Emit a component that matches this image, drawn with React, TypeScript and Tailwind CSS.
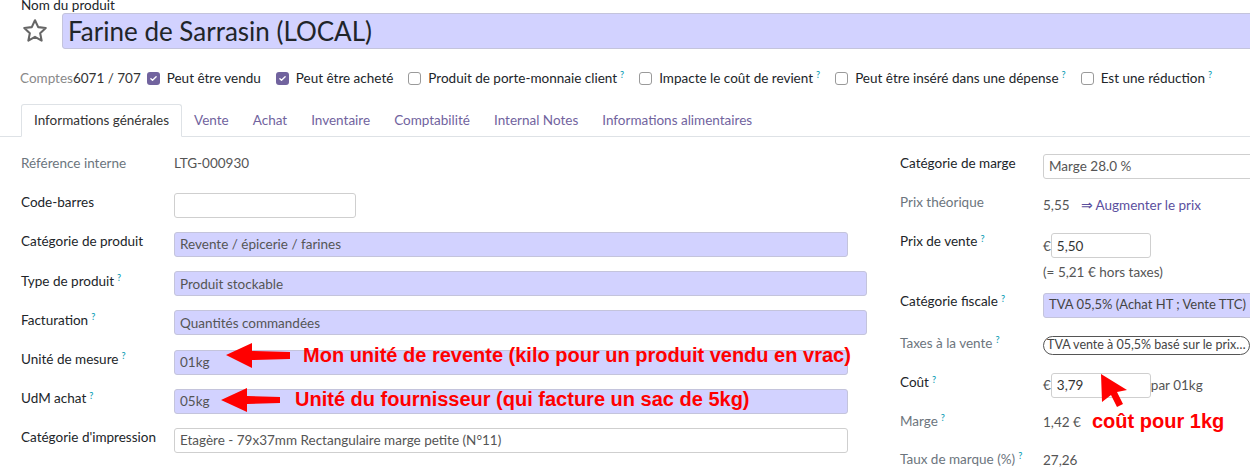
import type { ReactNode } from "react";

const font = { fontFamily: "Lato, 'Noto Sans', sans-serif" };
const noteFont = { fontFamily: "'Liberation Sans', Arial, sans-serif" };

function Help() {
  return <sup className="ml-[3px] text-[9px] font-semibold text-[#17a2b8]">?</sup>;
}

function Check({ on, label, help }: { on?: boolean; label: string; help?: boolean }) {
  return (
    <label className="flex items-center gap-[7px] whitespace-nowrap">
      {on ? (
        <span className="flex h-[13px] w-[13px] items-center justify-center rounded-[3px] bg-[#71639e]">
          <svg viewBox="0 0 12 12" className="h-[9px] w-[9px]">
            <path d="M2.5 6.2l2.2 2.2 4.8-4.8" fill="none" stroke="white" strokeWidth="1.8" strokeLinecap="round" strokeLinejoin="round" />
          </svg>
        </span>
      ) : (
        <span className="h-[13px] w-[13px] rounded-[3px] border border-[#9a9a9a] bg-white" />
      )}
      <span className="text-[#212529]">
        {label}
        {help ? <Help /> : null}
      </span>
    </label>
  );
}

function Field({ children, w, tone = "lav", className = "" }: { children?: ReactNode; w: string; tone?: "lav" | "white"; className?: string }) {
  const bg = tone === "lav" ? "bg-[#d2d2ff] border-[#c4c4dc]" : "bg-white border-[#cfcfcf]";
  return (
    <div className={`flex h-[25px] items-center overflow-hidden whitespace-nowrap rounded-[3px] border px-[5px] text-[13.5px] text-[#555] ${bg} ${w} ${className}`}>
      {children}
    </div>
  );
}

function Row({ label, muted, help, h = "h-[39.2px]", lw, children }: { label: string; muted?: boolean; help?: boolean; h?: string; lw: string; children?: ReactNode }) {
  return (
    <div className={`flex items-center ${h}`}>
      <div className={`${lw} shrink-0 -mt-[3px] text-[13.5px] ${muted ? "text-[#6c757d]" : "text-[#212529]"}`}>
        {label}
        {help ? <Help /> : null}
      </div>
      <div className="flex items-center">{children}</div>
    </div>
  );
}

const tabs = ["Vente", "Achat", "Inventaire", "Comptabilité", "Internal Notes", "Informations alimentaires"];

export default function App() {
  return (
    <div className="relative h-[469px] w-[1250px] overflow-hidden bg-white" style={font}>
      {/* header: product name */}
      <div className="absolute -top-[5px] left-[21px] text-[13.5px] text-[#212529]">Nom du produit</div>
      <div className="flex items-center pl-[21px] pt-[13px]">
        <svg viewBox="0 0 24 24" className="h-[28px] w-[28px] shrink-0">
          <path d="M12 2.8l2.75 5.9 6.45.75-4.78 4.4 1.28 6.37L12 17.03l-5.7 3.19 1.28-6.37L2.8 9.45l6.45-.75z" fill="none" stroke="#666" strokeWidth="1.8" strokeLinejoin="round" />
        </svg>
        <div className="ml-[13px] flex h-[36px] w-[1200px] shrink-0 items-center rounded-[3px] border border-[#c4c4dc] bg-[#d2d2ff] pl-[5px] text-[26px] text-[#212529]">
          Farine de Sarrasin (LOCAL)
        </div>
      </div>

      {/* flags */}
      <div className="mt-[20px] flex h-[18px] items-center pl-[20px] text-[13.5px]">
        <span className="text-[#8a8a8a]">Comptes</span>
        <span className="mr-[6px] text-[#333]">6071 / 707</span>
        <div className="flex items-center gap-[15px]">
          <Check on label="Peut être vendu" />
          <Check on label="Peut être acheté" />
          <Check label="Produit de porte-monnaie client" help />
          <Check label="Impacte le coût de revient" help />
          <Check label="Peut être inséré dans une dépense" help />
          <Check label="Est une réduction" help />
        </div>
      </div>

      {/* tabs */}
      <div className="mt-[17px] flex h-[33px] items-end border-b border-[#dee2e6] pl-[21px] text-[13.5px]">
        <div className="-mb-px flex h-[33px] items-center rounded-t-[3px] border border-b-white border-[#dee2e6] bg-white px-[12px] text-[#333]">
          Informations générales
        </div>
        {tabs.map((t) => (
          <div key={t} className="flex h-[32px] items-center px-[12px] text-[#71639e]">
            {t}
          </div>
        ))}
      </div>

      {/* form body */}
      <div className="flex pt-[8px]">
        <div className="w-[879px] shrink-0 pl-[21px]">
          <Row label="Référence interne" muted lw="w-[153px]">
            <span className="-mt-[3px] text-[13.5px] text-[#555]">LTG-000930</span>
          </Row>
          <Row label="Code-barres" lw="w-[153px]">
            <Field w="w-[182px]" tone="white" className="mt-[3px]" />
          </Row>
          <Row label="Catégorie de produit" lw="w-[153px]">
            <Field w="w-[674px]" className="mt-[3px]">Revente / épicerie / farines</Field>
          </Row>
          <Row label="Type de produit" help lw="w-[153px]">
            <Field w="w-[693px]" className="mt-[3px]">Produit stockable</Field>
          </Row>
          <Row label="Facturation" help lw="w-[153px]">
            <Field w="w-[693px]" className="mt-[3px]">Quantités commandées</Field>
          </Row>
          <Row label="Unité de mesure" help lw="w-[153px]">
            <Field w="w-[674px]" className="mt-[3px]">01kg</Field>
          </Row>
          <Row label="UdM achat" help lw="w-[153px]">
            <Field w="w-[674px]" className="mt-[3px]">05kg</Field>
          </Row>
          <Row label="Catégorie d'impression" lw="w-[153px]">
            <Field w="w-[674px]" tone="white" className="mt-[3px]">Etagère - 79x37mm Rectangulaire marge petite (N°11)</Field>
          </Row>
        </div>

        <div className="shrink-0 pl-[21px]">
          <Row label="Catégorie de marge" lw="w-[143px]">
            <Field w="w-[230px]" tone="white" className="mt-[3px]">Marge 28.0 %</Field>
          </Row>
          <Row label="Prix théorique" muted lw="w-[143px]">
            <span className="mt-[3px] text-[13.5px] text-[#555]">5,55</span>
            <span className="ml-[11px] mt-[3px] text-[13.5px] text-[#5b4f9e]">⇒ Augmenter le prix</span>
          </Row>
          <Row label="Prix de vente" help lw="w-[143px]">
            <span className="mt-[6px] text-[13.5px] text-[#555]">€</span>
            <Field w="w-[100px]" tone="white" className="mt-[6px]">
              <span className="text-[#333]">5,50</span>
            </Field>
          </Row>
          <div className="flex h-[19px] items-center pl-[143px] text-[13.5px] text-[#555]">(= 5,21 € hors taxes)</div>
          <Row label="Catégorie fiscale" help h="h-[43px]" lw="w-[143px]">
            <Field w="w-[230px]" className="mt-[4px] text-[13px]">
              <span className="text-[#444]">TVA 05,5% (Achat HT ; Vente TTC)</span>
            </Field>
          </Row>
          <Row label="Taxes à la vente" muted help h="h-[40px]" lw="w-[143px]">
            <div className="mt-[2px] flex h-[19px] w-[207px] items-center overflow-hidden whitespace-nowrap rounded-full border border-[#555] px-[3px] text-[12.5px] text-[#444]">
              TVA vente à 05,5% basé sur le prix…
            </div>
          </Row>
          <Row label="Coût" help h="h-[39px]" lw="w-[143px]">
            <span className="mt-[3px] text-[13.5px] text-[#555]">€</span>
            <Field w="w-[100px]" tone="white" className="mt-[3px]">
              <span className="text-[#333]">3,79</span>
            </Field>
            <span className="mt-[3px] text-[13.5px] text-[#555]">par 01kg</span>
          </Row>
          <Row label="Marge" muted help h="h-[38px]" lw="w-[143px]">
            <span className="text-[13.5px] text-[#555]">1,42 €</span>
          </Row>
          <Row label="Taux de marque (%)" muted help h="h-[38px]" lw="w-[143px]">
            <span className="text-[13.5px] text-[#555]">27,26</span>
          </Row>
        </div>
      </div>

      {/* red notes drawn over the form */}
      <svg className="pointer-events-none absolute left-0 top-0" width="1250" height="469">
        <polygon points="226,355 252,343 252,351 290,352 290,359 252,360 252,368" fill="#ff0000" />
        <polygon points="221,400 247,388 247,396 280,397 280,403 247,404 247,412" fill="#ff0000" />
        <polygon points="1101,374 1127,390 1117,392 1123,404 1117,407 1111,395 1102,402" fill="#ff0000" />
      </svg>
      <div className="pointer-events-none absolute left-[303px] top-[343px] whitespace-nowrap text-[20px] font-bold leading-[24px] text-[#ff0000]" style={noteFont}>
        Mon unité de revente (kilo pour un produit vendu en vrac)
      </div>
      <div className="pointer-events-none absolute left-[295px] top-[387px] whitespace-nowrap text-[20px] font-bold leading-[24px] text-[#ff0000]" style={noteFont}>
        Unité du fournisseur (qui facture un sac de 5kg)
      </div>
      <div className="pointer-events-none absolute left-[1092px] top-[409px] whitespace-nowrap text-[20px] font-bold leading-[24px] text-[#ff0000]" style={noteFont}>
        coût pour 1kg
      </div>
    </div>
  );
}
